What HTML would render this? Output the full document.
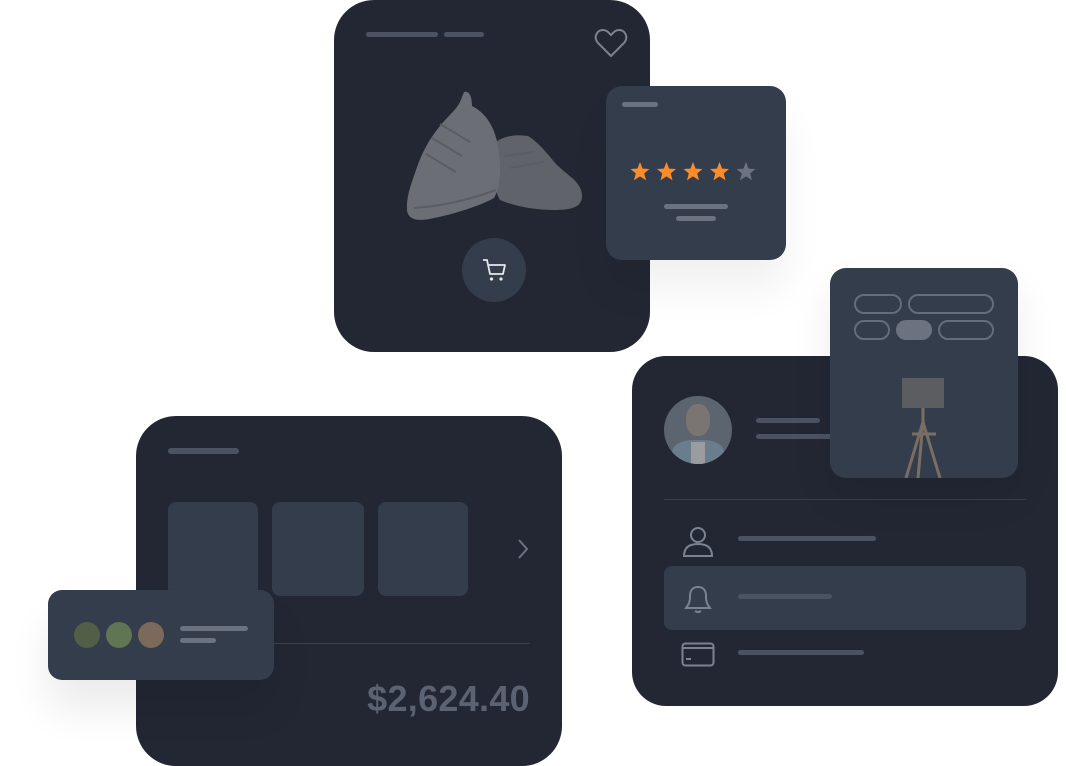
<!DOCTYPE html>
<html><head><style>
body{margin:0;width:1066px;height:766px;background:#fff;position:relative;overflow:hidden;font-family:"Liberation Sans",sans-serif}
.a{position:absolute}
.dk{background:#222733}
.lt{background:#343d4c}
.bar{position:absolute;height:6px;border-radius:3px;background:#4b5363}
.bl{position:absolute;height:6px;border-radius:3px;background:#6b7280}
.pill{position:absolute;border:2px solid #656d7b;border-radius:12px;box-sizing:border-box;height:20px}
</style></head><body>
<!-- shoe card -->
<div class="a dk" style="left:334px;top:0;width:316px;height:352px;border-radius:40px"></div>
<div class="bar" style="left:366px;top:32px;width:72px;height:5px"></div>
<div class="bar" style="left:444px;top:32px;width:40px;height:5px"></div>
<svg class="a" style="left:594px;top:28px" width="34" height="30" viewBox="0 0 34 30"><path d="M17 28 L4 15 C-1 9 3 2 9 2 C13 2 15 5 17 7 C19 5 21 2 25 2 C31 2 35 9 30 15 Z" fill="none" stroke="#7c8390" stroke-width="2"/></svg>
<svg class="a" style="left:404px;top:90px" width="182" height="134" viewBox="0 0 182 134">
<path d="M92 52 C100 46 112 44 124 46 C134 52 142 62 152 74 C164 86 178 92 178 106 C178 116 170 120 150 120 C130 120 110 116 96 110 C88 96 86 70 92 52Z" fill="#606369"/>
<path d="M60 2 C66 0 68 8 68 16 C80 22 90 34 94 56 C98 80 96 98 90 108 C76 116 50 124 30 128 C14 132 4 130 3 120 C2 106 8 92 12 80 C18 62 26 48 36 36 C44 26 52 20 56 12 Z" fill="#6b6e74"/>
<path d="M28 48 L58 66 M22 64 L52 82 M36 34 L66 52 M100 66 L130 62 M106 78 L140 72" stroke="#5a5d63" stroke-width="2" fill="none"/>
<path d="M10 118 C40 116 70 108 92 100" stroke="#5a5d63" stroke-width="2" fill="none"/>
</svg>
<div class="a lt" style="left:462px;top:238px;width:64px;height:64px;border-radius:50%"></div>
<svg class="a" style="left:482px;top:257px" width="26" height="26" viewBox="0 0 26 26"><path d="M1 3 H5 L8 17 H21 L23 8 H6" fill="none" stroke="#e5e7eb" stroke-width="1.8" stroke-linejoin="round"/><circle cx="9.5" cy="22" r="1.6" fill="#e5e7eb"/><circle cx="19" cy="22" r="1.6" fill="#e5e7eb"/></svg>
<!-- rating card -->
<div class="a lt" style="left:606px;top:86px;width:180px;height:174px;border-radius:16px;box-shadow:0 30px 40px rgba(0,0,0,0.06)"></div>
<div class="bl" style="left:622px;top:102px;width:36px;height:5px"></div>
<svg class="a" style="left:630px;top:160px" width="132" height="24" viewBox="0 0 132 24">
<g id="s"><path d="M10 2 L12.6 8.6 L19.5 9 L14.2 13.4 L16 20.2 L10 16.4 L4 20.2 L5.8 13.4 L0.5 9 L7.4 8.6Z" fill="#fb8c2a"/></g>
<use href="#s" x="26.5"/><use href="#s" x="53"/><use href="#s" x="79.5"/>
<path transform="translate(106,0)" d="M10 2 L12.6 8.6 L19.5 9 L14.2 13.4 L16 20.2 L10 16.4 L4 20.2 L5.8 13.4 L0.5 9 L7.4 8.6Z" fill="#6b7280"/>
</svg>
<div class="bl" style="left:664px;top:204px;width:64px;height:5px"></div>
<div class="bl" style="left:676px;top:216px;width:40px;height:5px"></div>
<!-- bottom-left card -->
<div class="a dk" style="left:136px;top:416px;width:426px;height:350px;border-radius:40px"></div>
<div class="bar" style="left:168px;top:448px;width:71px"></div>
<div class="a lt" style="left:168px;top:502px;width:90px;height:94px;border-radius:8px"></div>
<div class="a lt" style="left:272px;top:502px;width:92px;height:94px;border-radius:8px"></div>
<div class="a lt" style="left:378px;top:502px;width:90px;height:94px;border-radius:8px"></div>
<svg class="a" style="left:516px;top:538px" width="16" height="22"><path d="M3 2 L11 11 L3 20" fill="none" stroke="#6b7280" stroke-width="2"/></svg>
<div class="a" style="left:270px;top:643px;width:260px;height:1px;background:#3a4252"></div>
<div class="a" style="left:300px;top:678px;width:230px;text-align:right;font-size:36px;font-weight:bold;color:#5b6271;letter-spacing:0.3px">$2,624.40</div>
<!-- color card -->
<div class="a lt" style="left:48px;top:590px;width:226px;height:90px;border-radius:14px;box-shadow:0 30px 40px rgba(0,0,0,0.08)"></div>
<div class="a" style="left:74px;top:622px;width:26px;height:26px;border-radius:50%;background:#525e45"></div>
<div class="a" style="left:106px;top:622px;width:26px;height:26px;border-radius:50%;background:#607552"></div>
<div class="a" style="left:138px;top:622px;width:26px;height:26px;border-radius:50%;background:#7b6a5a"></div>
<div class="bl" style="left:180px;top:626px;width:68px;height:5px"></div>
<div class="bl" style="left:180px;top:638px;width:36px;height:5px"></div>
<!-- right card -->
<div class="a dk" style="left:632px;top:356px;width:426px;height:350px;border-radius:34px"></div>
<div class="a" style="left:664px;top:396px;width:68px;height:68px;border-radius:50%;background:#5c6470;overflow:hidden">
<div class="a" style="left:22px;top:8px;width:24px;height:32px;border-radius:45%;background:#7a7570"></div>
<div class="a" style="left:8px;top:44px;width:52px;height:30px;border-radius:40% 40% 0 0;background:#6a7d8c"></div>
<div class="a" style="left:27px;top:46px;width:14px;height:24px;background:#9a9ca0"></div>
</div>
<div class="bar" style="left:756px;top:418px;width:64px;height:5px"></div>
<div class="bar" style="left:756px;top:434px;width:80px;height:5px"></div>
<div class="a" style="left:664px;top:499px;width:362px;height:1px;background:#36404f"></div>
<svg class="a" style="left:680px;top:525px" width="34" height="34" viewBox="0 0 34 34"><circle cx="18" cy="10" r="7" fill="none" stroke="#7c8390" stroke-width="2"/><path d="M4 31 C4 22 10 19 18 19 C26 19 32 22 32 31 Z" fill="none" stroke="#7c8390" stroke-width="2"/></svg>
<div class="bar" style="left:738px;top:536px;width:138px;height:5px"></div>
<div class="a lt" style="left:664px;top:566px;width:362px;height:64px;border-radius:8px"></div>
<svg class="a" style="left:682px;top:582px" width="32" height="32" viewBox="0 0 32 32"><path d="M4 26 H28 C25 22 24 20 24 14 C24 8 21 5 16 5 C11 5 8 8 8 14 C8 20 7 22 4 26Z" fill="none" stroke="#7c8390" stroke-width="2"/><path d="M13 29 Q16 31 19 29" fill="none" stroke="#7c8390" stroke-width="2"/></svg>
<div class="bar" style="left:738px;top:594px;width:94px;height:5px"></div>
<svg class="a" style="left:681px;top:642px" width="34" height="26" viewBox="0 0 34 26"><rect x="1.5" y="1.5" width="31" height="22" rx="3" fill="none" stroke="#7c8390" stroke-width="2"/><path d="M2 6 H32" stroke="#7c8390" stroke-width="2"/><path d="M5 17 H10" stroke="#7c8390" stroke-width="2"/></svg>
<div class="bar" style="left:738px;top:650px;width:126px;height:5px"></div>
<!-- lamp card -->
<div class="a lt" style="left:830px;top:268px;width:188px;height:210px;border-radius:16px;box-shadow:0 20px 40px rgba(0,0,0,0.08)"></div>
<div class="pill" style="left:854px;top:294px;width:48px"></div>
<div class="pill" style="left:908px;top:294px;width:86px"></div>
<div class="pill" style="left:854px;top:320px;width:36px"></div>
<div class="a" style="left:896px;top:320px;width:36px;height:20px;border-radius:10px;background:#6b7280"></div>
<div class="pill" style="left:938px;top:320px;width:56px"></div>
<svg class="a" style="left:896px;top:376px" width="56" height="102" viewBox="0 0 56 102"><rect x="6" y="2" width="42" height="30" fill="#5c5d60"/><path d="M27 32 V46" stroke="#7a6e64" stroke-width="3"/><path d="M27 46 L10 102 M27 46 L44 102 M27 46 L22 102 M16 58 H40" stroke="#7a6e64" stroke-width="3"/></svg>
</body></html>
